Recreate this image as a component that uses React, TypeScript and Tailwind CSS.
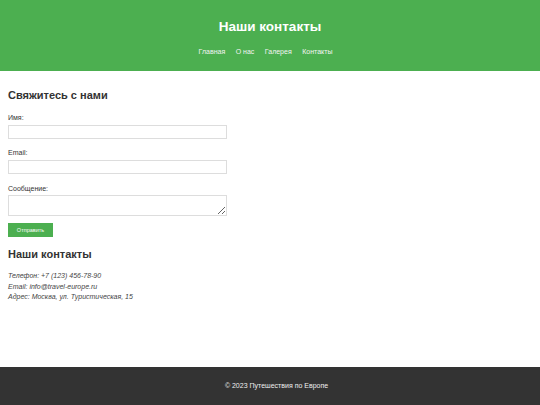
export default function App() {
  const font = { fontFamily: '"Liberation Sans", Arial, sans-serif' };
  return (
    <div className="flex flex-col w-[540px] h-[405px] bg-white text-[#333]" style={font}>
      <header className="h-[71px] bg-[#4CAF50] text-white flex flex-col items-center">
        <h1 className="mt-[18px] text-[13.5px] leading-[17px] font-bold">Наши контакты</h1>
        <nav className="mt-[12px] pr-[9px] flex gap-[10.5px] text-[7px] leading-[9px] text-[#f3f3f3]">
          <a>Главная</a>
          <a>О нас</a>
          <a>Галерея</a>
          <a>Контакты</a>
        </nav>
      </header>
      <main className="flex-1 px-[8px] pt-[18px]">
        <h2 className="text-[11px] leading-[13px] font-bold">Свяжитесь с нами</h2>
        <div className="mt-[11px] flex flex-col">
          <label className="text-[7px] leading-[9px] mb-[3px]">Имя:</label>
          <input className="w-[219px] h-[14px] border border-[#ddd] outline-none" />
          <label className="mt-[9px] text-[7px] leading-[9px] mb-[3px]">Email:</label>
          <input className="w-[219px] h-[14px] border border-[#ddd] outline-none" />
          <label className="mt-[10px] text-[7px] leading-[9px] mb-[2px]">Сообщение:</label>
          <textarea className="w-[219px] h-[21px] border border-[#ddd] outline-none block" />
          <button className="mt-[7px] w-[45px] h-[14px] bg-[#4CAF50] text-white text-[5.5px] leading-[14px]">Отправить</button>
        </div>
        <h2 className="mt-[11px] text-[11px] leading-[13px] font-bold">Наши контакты</h2>
        <div className="mt-[10px] text-[7px] leading-[10.5px] italic text-[#444]">
          <p>Телефон: +7 (123) 456-78-90</p>
          <p>Email: info@travel-europe.ru</p>
          <p>Адрес: Москва, ул. Туристическая, 15</p>
        </div>
      </main>
      <footer className="h-[38px] bg-[#333] text-[#eee] flex items-center justify-center pl-[13px] text-[7px]">
        © 2023 Путешествия по Европе
      </footer>
    </div>
  );
}
